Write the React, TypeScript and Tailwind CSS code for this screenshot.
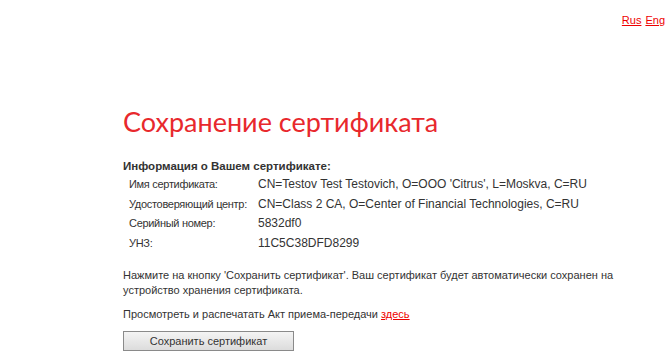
export default function App() {
  const rows = [
    ["Имя сертификата:", "CN=Testov Test Testovich, O=OOO 'Citrus', L=Moskva, C=RU"],
    ["Удостоверяющий центр:", "CN=Class 2 CA, O=Center of Financial Technologies, C=RU"],
    ["Серийный номер:", "5832df0"],
    ["УНЗ:", "11C5C38DFD8299"],
  ];

  return (
    <div className="w-[670px] h-[364px] bg-white text-[#333] font-['Liberation_Sans',sans-serif] text-[11px] leading-[15px] overflow-hidden">
      <div className="flex justify-end gap-[4px] pt-[13px] pr-[5px] text-[11px]">
        <a href="#" className="text-[#e00] underline">Rus</a>
        <a href="#" className="text-[#e00] underline">Eng</a>
      </div>

      <div className="pl-[123px] pt-[76px]">
        <h1 className="text-[#e8282d] text-[27px] leading-[36px] font-['Lato',sans-serif]">
          Сохранение сертификата
        </h1>

        <div className="mt-[19px] font-bold text-[11.5px]">Информация о Вашем сертификате:</div>
        <div className="mt-[1px] flex flex-col">
          {rows.map(([k, v]) => (
            <div key={k} className="flex leading-[19.5px] whitespace-nowrap">
              <span className="w-[135px] pl-[6px] tracking-[-0.3px]">{k}</span>
              <span className="text-[12px]">{v}</span>
            </div>
          ))}
        </div>

        <p className="mt-[14.5px]">
          Нажмите на кнопку 'Сохранить сертификат'. Ваш сертификат будет автоматически сохранен на
          <br />
          устройство хранения сертификата.
        </p>
        <p className="mt-[9px]">
          Просмотреть и распечатать Акт приема-передачи{" "}
          <a href="#" className="text-[#e00] underline">здесь</a>
        </p>
        <button className="mt-[9.5px] w-[171px] h-[20px] border border-[#8a8a8a] bg-gradient-to-b from-[#f4f4f4] to-[#dcdcdc] text-[11px] leading-[18px] text-[#333]">
          Сохранить сертификат
        </button>
      </div>
    </div>
  );
}
